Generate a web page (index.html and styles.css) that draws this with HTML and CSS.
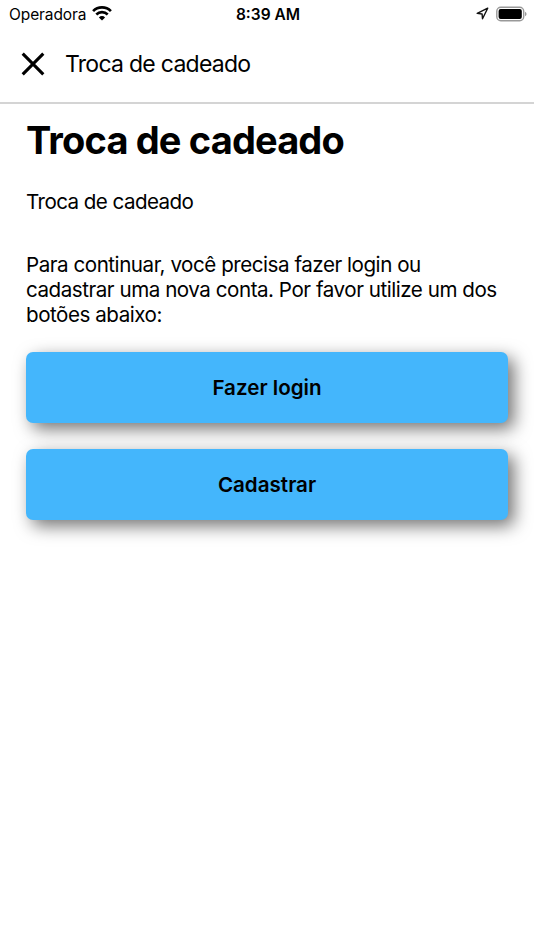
FILE: index.html
```html
<!DOCTYPE html>
<html lang="pt-BR">
<head>
    <meta charset="UTF-8">
    <meta name="viewport" content="width=device-width, initial-scale=1.0">
    <title>Troca de cadeado</title>
    <link rel="stylesheet" href="styles.css">
</head>
<body>
    <div class="status-bar">
        <div class="carrier">
            <span>Operadora</span>
            <svg class="wifi" width="20" height="15" viewBox="0 0 20 15" fill="none" stroke="#000">
                <path d="M1.1 5.1a12.6 12.6 0 0 1 17.8 0" stroke-width="2.7"/>
                <path d="M4.3 8.5a8.1 8.1 0 0 1 11.4 0" stroke-width="2.6"/>
                <path d="M10 14.6 6.9 11.4a4.4 4.4 0 0 1 6.2 0z" fill="#000" stroke="none"/>
            </svg>
        </div>
        <div class="time">8:39 AM</div>
        <div class="indicators">
            <svg width="13" height="13" viewBox="0 0 13 13" fill="none" stroke="#111" stroke-width="1.4" stroke-linejoin="round">
                <path d="M11.7 1.2 1.2 6.4l4.9.6.4 4.8z"/>
            </svg>
            <svg width="31" height="16" viewBox="0 0 31 16">
                <rect x="0.8" y="1.3" width="26.9" height="13.4" rx="4" fill="none" stroke="#999" stroke-width="1.4"/>
                <rect x="2.6" y="3" width="23.2" height="10" rx="2" fill="#000"/>
                <path d="M29 5.7q1.6.7 1.6 2.3T29 10.3z" fill="#999"/>
            </svg>
        </div>
    </div>

    <header class="nav-bar">
        <button class="close" aria-label="Fechar">
            <svg width="24" height="24" viewBox="0 0 24 24" fill="none" stroke="#000" stroke-width="3.1">
                <path d="M1.7 1.7 22.3 22.3M22.3 1.7 1.7 22.3"/>
            </svg>
        </button>
        <span class="nav-title">Troca de cadeado</span>
    </header>

    <main class="content">
        <h1>Troca de cadeado</h1>
        <p class="description">Troca de cadeado</p>
        <p class="message">Para continuar, você precisa fazer login ou cadastrar uma nova conta. Por favor utilize um dos botões abaixo:</p>
        <div class="actions">
            <button class="action">Fazer login</button>
            <button class="action">Cadastrar</button>
        </div>
    </main>
</body>
</html>
```

FILE: styles.css
```css
* {
    box-sizing: border-box;
}
body {
    margin: 0;
    min-height: 100vh;
    background: #fff;
    color: #000;
    font-family: Inter, 'Liberation Sans', sans-serif;
}
button {
    border: none;
    color: inherit;
    font-family: inherit;
    cursor: pointer;
}
.status-bar {
    display: grid;
    grid-template-columns: 1fr auto 1fr;
    align-items: center;
    height: 27px;
    padding: 0 7px 0 9px;
    font-size: 15.5px;
}
.carrier {
    display: flex;
    align-items: center;
    gap: 6px;
    letter-spacing: -0.1px;
}
.carrier span,
.time {
    padding-top: 1px;
}
.wifi {
    margin-top: -1px;
}
.time {
    font-weight: 600;
}
.indicators {
    display: flex;
    align-items: center;
    justify-content: flex-end;
    gap: 7px;
}
.nav-bar {
    display: flex;
    align-items: center;
    height: 77px;
    padding: 0 20.5px 2px;
    gap: 20.5px;
    border-bottom: 2px solid #d4d4d4;
}
.close {
    display: flex;
    padding: 0;
    background: none;
}
.nav-title {
    font-size: 23px;
    letter-spacing: -0.73px;
}
.content {
    padding: 13px 26px;
}
h1 {
    margin: 0;
    font-size: 38px;
    line-height: 46px;
    font-weight: 700;
    letter-spacing: -0.85px;
}
.description,
.message {
    margin: 27px 0 0;
    font-size: 20.6px;
    line-height: 24.7px;
    letter-spacing: -0.57px;
}
.message {
    margin-top: 38.6px;
    letter-spacing: -0.47px;
}
.actions {
    display: flex;
    flex-direction: column;
    gap: 26px;
    margin-top: 24.4px;
}
.action {
    height: 71px;
    border-radius: 7px;
    background: #44b6fc;
    font-size: 20.6px;
    font-weight: 600;
    box-shadow: 6px 6px 17px rgba(0, 0, 0, 0.55);
}
```
